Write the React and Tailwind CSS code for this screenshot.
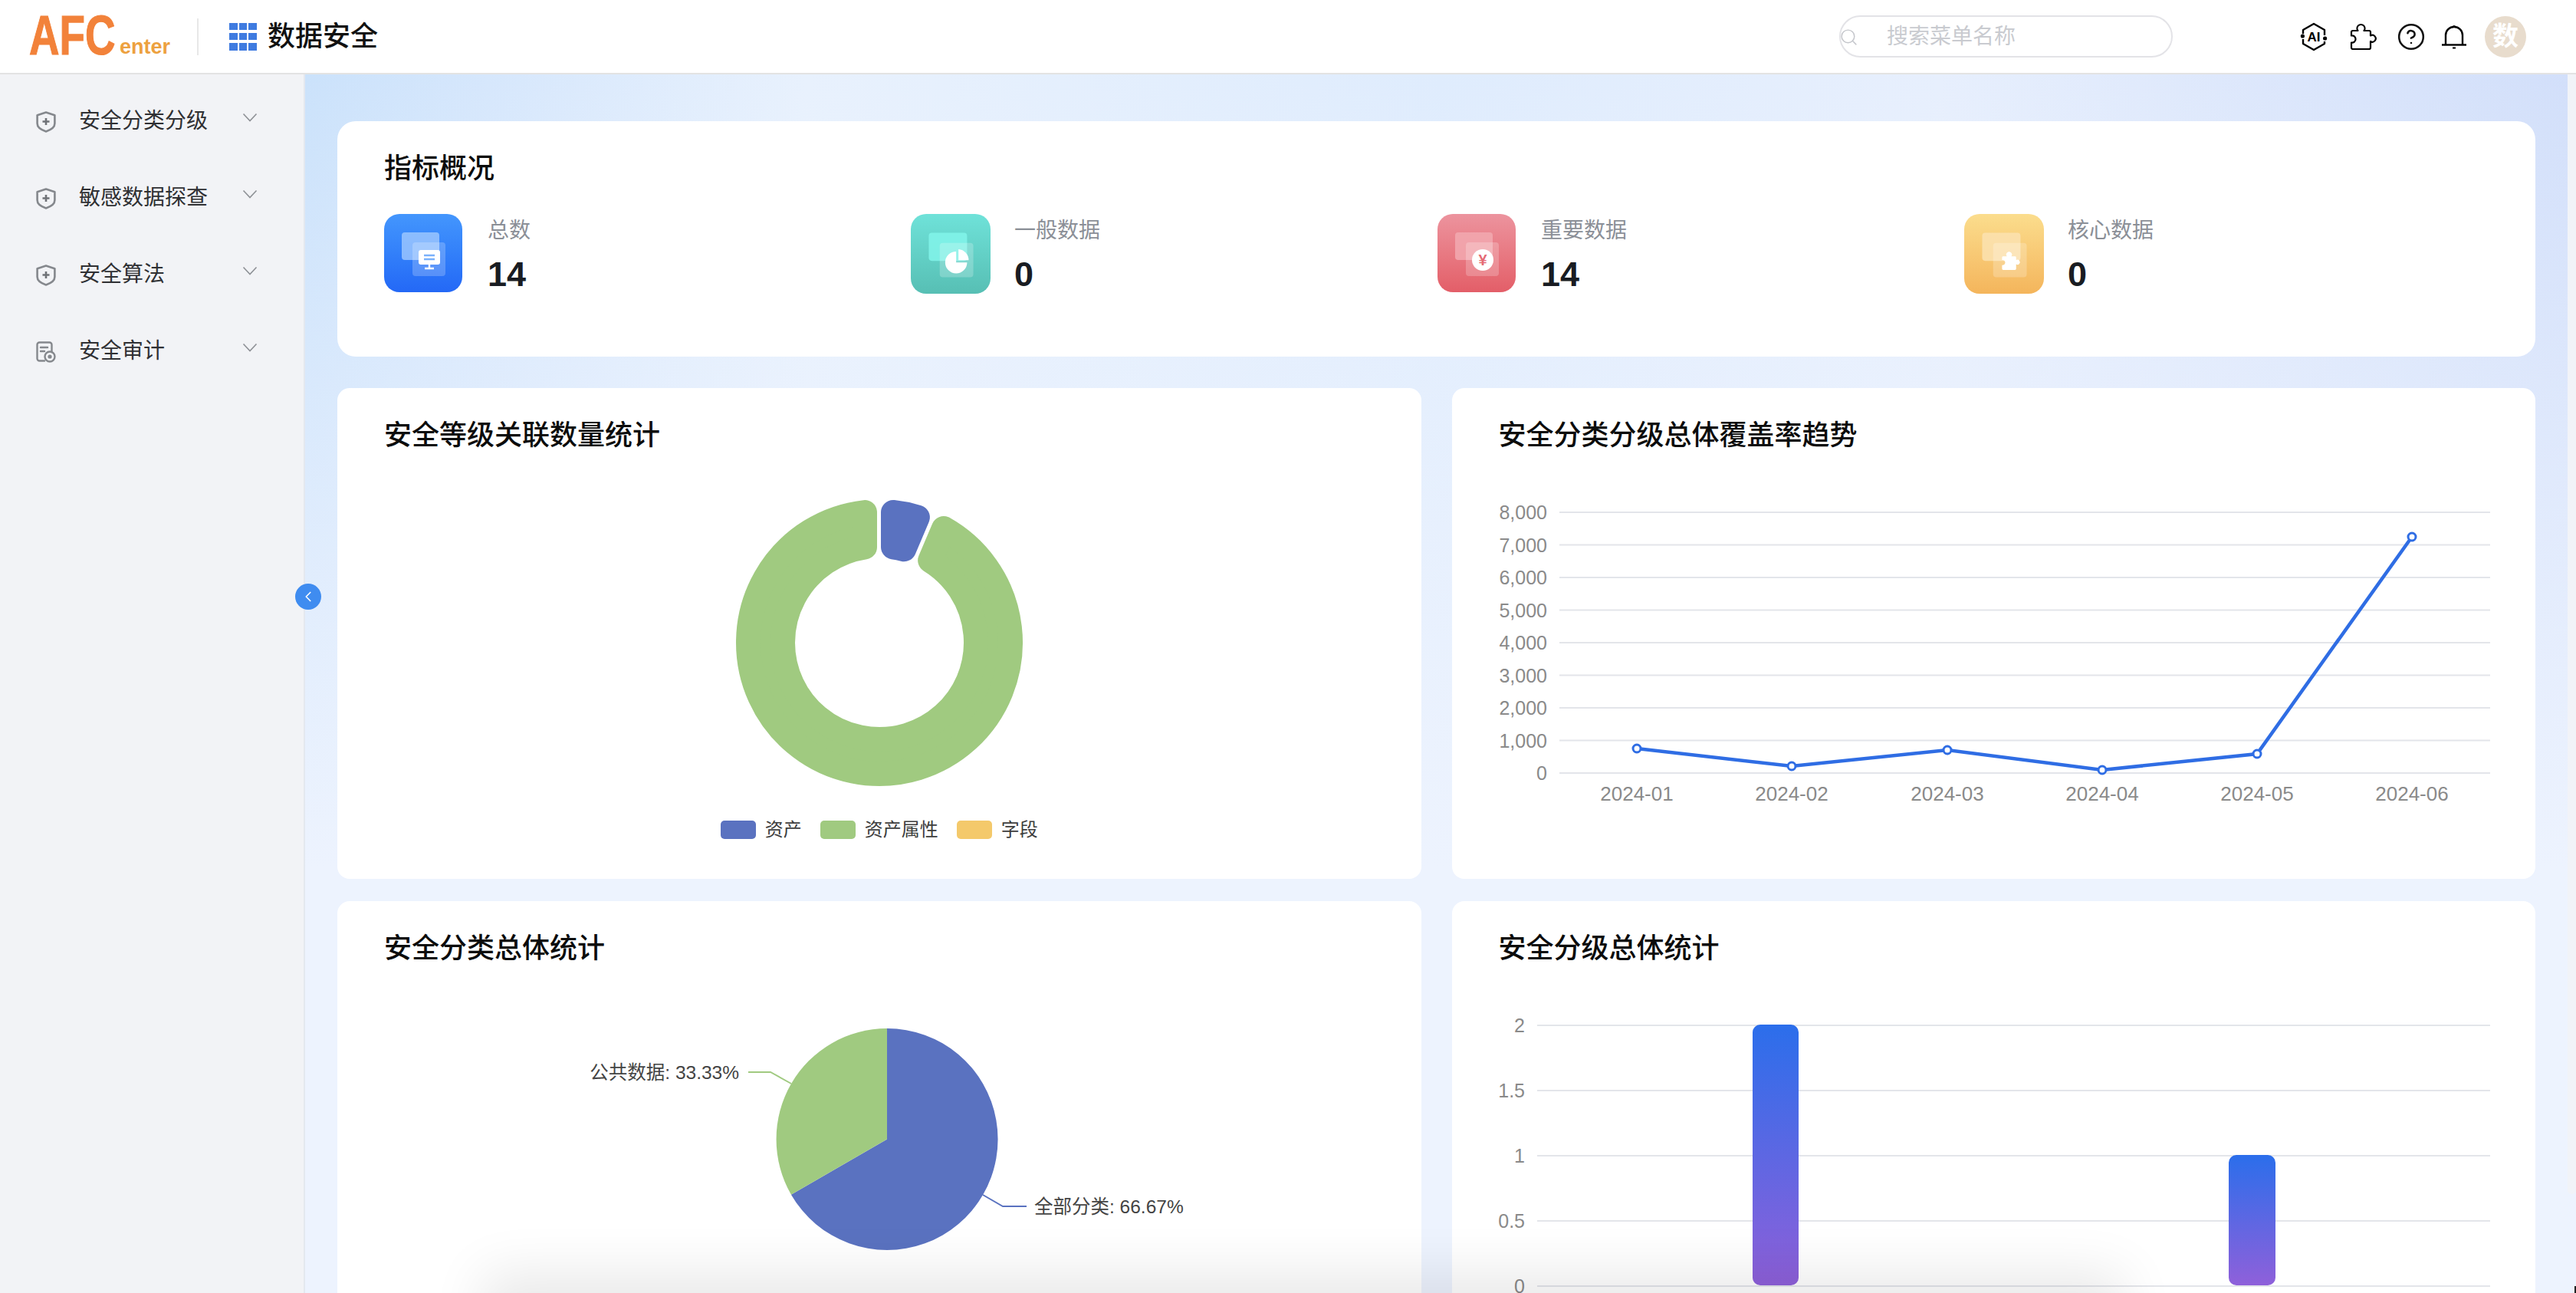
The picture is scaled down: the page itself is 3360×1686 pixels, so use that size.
import { ChevronLeft, CircleHelp, Search } from 'lucide-react';

const menus = ['安全分类分级', '敏感数据探查', '安全算法', '安全审计'];

const stats = [
  { label: '一般数据', value: '0', size: 'w-[104px] h-[104px]', bg: 'from-[#6fe2d9] to-[#57bfb4]', back: '#82f5ea', glyph: 'pie' },
  { label: '重要数据', value: '14', size: 'w-[102px] h-[102px]', bg: 'from-[#ec939e] to-[#e35e68]', back: '#f2a9b0', glyph: 'yen' },
  { label: '核心数据', value: '0', size: 'w-[104px] h-[104px]', bg: 'from-[#fbdd8d] to-[#f4b55b]', back: '#fbe2b0', glyph: 'puzzle' },
];

const lineYs = [668, 710.5, 753, 795.5, 838, 880.5, 923, 965.5, 1008];
const lineData = [
  { x: 2135, y: 976, m: '2024-01' },
  { x: 2337, y: 999, m: '2024-02' },
  { x: 2540, y: 978, m: '2024-03' },
  { x: 2742, y: 1004, m: '2024-04' },
  { x: 2944, y: 983, m: '2024-05' },
  { x: 3146, y: 700, m: '2024-06' },
];

const barTicks = [
  { y: 1337, t: '2' },
  { y: 1422, t: '1.5' },
  { y: 1507, t: '1' },
  { y: 1592, t: '0.5' },
  { y: 1677, t: '0' },
];

const puzzlePath =
  'M4 10h6.5a5 5 0 1 1 8 0H25a2 2 0 0 1 2 2v4.5a4.4 4.4 0 1 1 0 7.5V32a2 2 0 0 1-2 2H4a2 2 0 0 1-2-2v-6.5a4.6 4.6 0 1 0 0-9V12a2 2 0 0 1 2-2Z';

// annular sector, inset and stroked so the corners come out round
function sector(a0, a1, pad) {
  const cx = 1147;
  const cy = 838;
  const cr = 16;
  const rad = (d) => (d * Math.PI) / 180;
  const pt = (r, a) => `${cx + r * Math.sin(a)} ${cy - r * Math.cos(a)}`;
  const r0 = 110 + cr;
  const r1 = 187 - cr;
  const off = cr + pad;
  const o0 = rad(a0) + Math.asin(off / r1);
  const o1 = rad(a1) - Math.asin(off / r1);
  const i0 = rad(a0) + Math.asin(off / r0);
  const i1 = rad(a1) - Math.asin(off / r0);
  const large = a1 - a0 > 180 ? 1 : 0;
  return `M${pt(r1, o0)} A${r1} ${r1} 0 ${large} 1 ${pt(r1, o1)} L${pt(r0, i1)} A${r0} ${r0} 0 ${large} 0 ${pt(r0, i0)} Z`;
}

function Shield() {
  return (
    <svg width="26" height="28" viewBox="0 0 26 28" fill="none" stroke="#85888d" strokeWidth="2.6">
      <path d="M13 1.6 24.4 5.2V16c0 4.6-4.6 8.2-11.4 10.4C6.2 24.2 1.6 20.6 1.6 16V5.2Z" strokeLinejoin="round" />
      <path d="M13 9v9M8.5 13.5h9" strokeWidth="2.6" stroke="#6f7277" />
    </svg>
  );
}

function AuditIcon() {
  return (
    <svg width="26" height="28" viewBox="0 0 26 28" fill="none" stroke="#85888d" strokeWidth="2.4">
      <path d="M11 25.5H4.5a3 3 0 0 1-3-3v-18a3 3 0 0 1 3-3h13a3 3 0 0 1 3 3V14" strokeLinecap="round" />
      <path d="M6 8h9M6 13h5" strokeLinecap="round" />
      <circle cx="18" cy="20" r="6.5" />
      <circle cx="18" cy="20" r="2.6" fill="#85888d" stroke="none" />
    </svg>
  );
}

function StatIcon({ size, bg, back, glyph, tone }) {
  return (
    <div className={`${size} shrink-0 rounded-[20px] bg-linear-to-b ${bg}`}>
      <svg viewBox="0 0 102 102" className="w-full h-full">
        <rect x="23" y="24" width="49" height="36" rx="4" fill={back} fillOpacity={glyph === 'monitor' ? 0.75 : 0.85} />
        <rect x="37" y="37" width="43" height="44" rx="4" fill="#fff" fillOpacity="0.22" />
        {glyph === 'monitor' && (
          <g>
            <rect x="45" y="47" width="28" height="19" rx="3" fill="#fff" />
            <path d="M52 54h14M52 59h14" stroke={tone} strokeWidth="2.4" />
            <path d="M59 66v4M53 71h12" stroke="#fff" strokeWidth="2.4" />
          </g>
        )}
        {glyph === 'pie' && (
          <g fill="#fff">
            <path d="M58 48v14h14a14 14 0 1 1-14-14Z" />
            <path d="M61 45a14 14 0 0 1 13 14H61Z" />
          </g>
        )}
        {glyph === 'yen' && (
          <g>
            <circle cx="59" cy="60" r="14" fill="#fff" />
            <text x="59" y="67" textAnchor="middle" fontSize="20" fontWeight="700" fill="#e56a75">¥</text>
          </g>
        )}
        {glyph === 'puzzle' && <path d={puzzlePath} transform="translate(47 47) scale(0.72)" fill="#fff" />}
      </svg>
    </div>
  );
}

function Stat({ label, value, icon }) {
  return (
    <div className="flex gap-[33px]">
      <div className="w-[102px]">{icon}</div>
      <div className="flex flex-col gap-[13px] pt-[4px]">
        <div className="text-[28px] leading-[36px] text-[#8b8f97]">{label}</div>
        <div className="text-[45px] leading-[52px] font-bold text-[#191c22]">{value}</div>
      </div>
    </div>
  );
}

function ChartCard({ title, children }) {
  return (
    <section className="h-[640px] rounded-[16px] bg-white pt-[44px]">
      <h2 className="pl-[61px] -mb-[2px] text-[36px] leading-[36px] font-medium text-[#0c0c0c]">{title}</h2>
      {children}
    </section>
  );
}

export default function App() {
  return (
    <div className="relative flex flex-col w-[3360px] h-[1686px] overflow-hidden bg-white font-['Liberation_Sans','Noto_Sans_CJK_SC',sans-serif]">
      {/* Header */}
      <header className="flex items-center h-[97px] shrink-0 border-b-2 border-[#e3e3e3] bg-white pl-[38px]">
        <svg width="190" height="84" viewBox="0 -14 190 84" className="shrink-0">
          <text transform="translate(0 51) scale(0.76 1)" fontSize="72" fontWeight="700" fill="#f2823a" stroke="#f2823a" strokeWidth="1.2">AFC</text>
          <text x="118" y="50" fontSize="27" fontWeight="700" fill="#eda13f">enter</text>
        </svg>
        <div className="w-[2px] h-[48px] ml-[29px] bg-[#e8e8e8]" />
        <div className="grid grid-cols-3 gap-x-[2px] gap-y-[4px] w-[36px] h-[36px] ml-[40px]">
          {[...Array(9)].map((_, i) => (
            <div key={i} className="bg-[#3f7be0]" />
          ))}
        </div>
        <div className="ml-[14px] text-[36px] font-medium text-[#111]">数据安全</div>

        <div className="relative flex items-center w-[435px] h-[55px] ml-[1906px] rounded-full border-2 border-[#e3e3e7] pl-[60px]">
          <Search className="absolute -left-[2px] top-[14px] text-[#c4c6cb]" size={25} strokeWidth={1.4} />
          <span className="text-[28px] text-[#c9cbd0]">搜索菜单名称</span>
        </div>

        <div className="flex items-center ml-[166px]">
          <svg width="36" height="38" viewBox="0 0 36 38" fill="none" stroke="#000" strokeWidth="2.4" className="shrink-0">
            <path d="M4 15V10L18 2l14 8v7M32 25v3l-14 8-14-8v-6" strokeLinejoin="round" />
            <text x="18" y="25" textAnchor="middle" fontSize="17" fontWeight="700" fill="#000" stroke="none">AI</text>
            <circle cx="3.4" cy="18" r="2.6" fill="#000" stroke="none" />
            <circle cx="32.6" cy="21" r="2.6" fill="#000" stroke="none" />
          </svg>
          <svg width="36" height="36" viewBox="0 0 36 36" fill="none" stroke="#000" strokeWidth="2.2" className="ml-[29px] shrink-0">
            <path d={puzzlePath} strokeLinejoin="round" />
          </svg>
          <CircleHelp className="ml-[25px] text-[#111]" size={38} strokeWidth={1.6} />
          <svg width="32" height="32" viewBox="0 0 32 32" fill="none" stroke="#000" strokeWidth="2.4" className="ml-[21px] shrink-0">
            <path d="M5 26V14C5 7.5 10 3 16 3s11 4.5 11 11v12" />
            <path d="M0 26.5h32" />
            <path d="M14.5 2.2h3M14 30.6h4" strokeWidth="2" />
          </svg>
          <div className="flex items-center justify-center w-[54px] h-[54px] ml-[24px] rounded-full bg-[#e8dccd] text-[34px] font-bold text-white">
            数
          </div>
        </div>
      </header>

      <div className="flex flex-1 min-h-0">
        {/* Sidebar */}
        <aside className="w-[398px] shrink-0 border-r-2 border-[#e4e8ef] bg-[#f2f3f6] pt-[11px] pl-[47px] pr-[60px]">
          {menus.map((m, i) => (
            <div key={m} className="flex items-center h-[100px]">
              <div className="w-[26px] h-[28px] mt-[2px]">{i === 3 ? <AuditIcon /> : <Shield />}</div>
              <span className="ml-[30px] text-[28px] text-[#2f3033]">{m}</span>
              <svg width="20" height="12" viewBox="0 0 20 12" fill="none" stroke="#8e9196" strokeWidth="1.6" className="ml-auto -mt-[10px]">
                <path d="M1.5 1.5 10 10.5 18.5 1.5" />
              </svg>
            </div>
          ))}
        </aside>

        {/* Main */}
        <main className="flex-1 min-w-0 overflow-hidden pt-[61px] pl-[42px] pr-[53px] bg-[linear-gradient(180deg,rgba(238,244,254,0)_0,#edf3fe_65%),linear-gradient(90deg,#cbe2fb_0,#d6e7fc_8%,#e8f1fd_22%,#dfecfd_50%,#e7effd_72%,#d2dffa_100%)]">
          <section className="h-[307px] rounded-[24px] bg-white pt-[44px] pl-[61px] pr-[58px]">
            <h2 className="text-[36px] leading-[36px] font-medium text-[#0c0c0c]">指标概况</h2>
            <div className="grid grid-cols-4 mt-[41px]">
              <Stat
                label="总数"
                value="14"
                icon={<StatIcon size="w-[102px] h-[102px]" bg="from-[#4496fd] to-[#2468f6]" back="#a8ceff" glyph="monitor" tone="#7ab1fb" />}
              />
              {stats.map((s) => (
                <Stat key={s.label} label={s.label} value={s.value} icon={<StatIcon {...s} />} />
              ))}
            </div>
          </section>

          <div className="grid grid-cols-2 gap-x-[40px] gap-y-[29px] mt-[41px]">
            <ChartCard title="安全等级关联数量统计">
              <svg width="1413" height="520" viewBox="440 584 1413 520" className="block">
                <path d={sector(23, 360, 3)} fill="#a0ca80" stroke="#a0ca80" strokeWidth="32" strokeLinejoin="round" />
                <path d={sector(0, 23, 2)} fill="#5a72c0" stroke="#5a72c0" strokeWidth="32" strokeLinejoin="round" />
              </svg>
              <div className="flex justify-center gap-[24px] -mt-[34px] text-[24px] leading-[24px] text-[#3d3d3d]">
                <div className="flex items-center gap-[12px]">
                  <i className="w-[46px] h-[24px] rounded-[5px] bg-[#5a72c0]" />
                  资产
                </div>
                <div className="flex items-center gap-[12px]">
                  <i className="w-[46px] h-[24px] rounded-[5px] bg-[#a0ca80]" />
                  资产属性
                </div>
                <div className="flex items-center gap-[12px]">
                  <i className="w-[46px] h-[24px] rounded-[5px] bg-[#f4c96b]" />
                  字段
                </div>
              </div>
            </ChartCard>

            <ChartCard title="安全分类分级总体覆盖率趋势">
              <svg width="1413" height="520" viewBox="1894 584 1413 520" className="block">
                {lineYs.map((y, i) => (
                  <g key={y}>
                    <path d={`M2034 ${y}H3248`} stroke="#e3e5ea" strokeWidth="2" />
                    <text x="2018" y={y + 9} textAnchor="end" fontSize="25" fill="#8a8a8a">
                      {i === 8 ? '0' : `${8 - i},000`}
                    </text>
                  </g>
                ))}
                <polyline points={lineData.map((d) => `${d.x},${d.y}`).join(' ')} fill="none" stroke="#2f6de4" strokeWidth="4.5" />
                {lineData.map((d) => (
                  <g key={d.m}>
                    <circle cx={d.x} cy={d.y} r="5" fill="#fff" stroke="#2f6de4" strokeWidth="3" />
                    <text x={d.x} y="1044" textAnchor="middle" fontSize="26" fill="#8a8a8a">{d.m}</text>
                  </g>
                ))}
              </svg>
            </ChartCard>

            <ChartCard title="安全分类总体统计">
              <svg width="1413" height="520" viewBox="440 1253 1413 520" className="block">
                <path d="M1157 1485.5V1341A144.5 144.5 0 1 1 1031.9 1557.7Z" fill="#5a72c0" />
                <path d="M1157 1485.5 1031.9 1557.7A144.5 144.5 0 0 1 1157 1341Z" fill="#a0ca80" />
                <path d="M976 1398H1005L1032 1413" fill="none" stroke="#a0ca80" strokeWidth="2" />
                <path d="M1282 1558 1308 1573H1339" fill="none" stroke="#5a72c0" strokeWidth="2" />
                <text x="964" y="1407" textAnchor="end" fontSize="24.5" fill="#444">公共数据: 33.33%</text>
                <text x="1349" y="1582" fontSize="24.5" fill="#444">全部分类: 66.67%</text>
              </svg>
            </ChartCard>

            <ChartCard title="安全分级总体统计">
              <svg width="1413" height="520" viewBox="1894 1253 1413 520" className="block">
                <defs>
                  <linearGradient id="barFill" x1="0" y1="0" x2="0" y2="1">
                    <stop offset="0" stopColor="#2b6eeb" />
                    <stop offset="1" stopColor="#8f60da" />
                  </linearGradient>
                </defs>
                {barTicks.map((b) => (
                  <g key={b.t}>
                    <path d={`M2005 ${b.y}H3248`} stroke="#e3e5ea" strokeWidth="2" />
                    <text x="1989" y={b.y + 9} textAnchor="end" fontSize="25" fill="#8a8a8a">{b.t}</text>
                  </g>
                ))}
                <rect x="2286" y="1336" width="60" height="340" rx="10" fill="url(#barFill)" />
                <rect x="2907" y="1506" width="61" height="170" rx="10" fill="url(#barFill)" />
              </svg>
            </ChartCard>
          </div>
        </main>
      </div>

      {/* collapse handle */}
      <button className="absolute left-[385px] top-[761px] flex items-center justify-center w-[34px] h-[34px] rounded-full bg-[#3f8cf0] text-white">
        <ChevronLeft size={22} strokeWidth={1.8} />
      </button>

      {/* scrollbar */}
      <div className="absolute right-0 top-[97px] w-[11px] h-[1460px] rounded-b-[6px] bg-[#f1f3f8]" />

      {/* shadow of a floating bar below the fold */}
      <div className="absolute left-[660px] top-[1690px] w-[2080px] h-[60px] shadow-[0_0_70px_30px_rgba(0,0,0,0.09)]" />

      {/* window corner */}
      <div className="absolute right-0 top-[1677px] w-[2px] h-[9px] bg-[#222]" />
    </div>
  );
}
